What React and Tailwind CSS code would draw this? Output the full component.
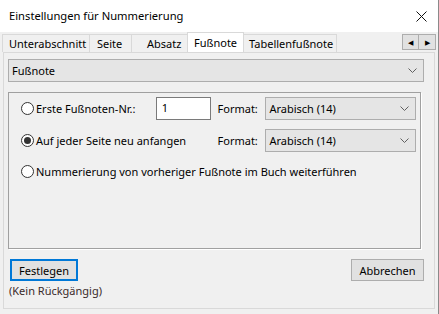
const font = { fontFamily: '"Segoe UI", "Noto Sans", Arial, sans-serif' };

function Chevron() {
  return (
    <svg width="9" height="5" viewBox="0 0 9 5" className="block">
      <path d="M0.5 0.5 L4.5 4.5 L8.5 0.5" fill="none" stroke="#606060" strokeWidth="1" />
    </svg>
  );
}

function Combo({ label, className }) {
  return (
    <div className={`flex h-[23px] items-center justify-between border border-[#adadad] bg-[#e5e5e5] pl-[3px] pr-[6px] ${className}`}>
      <span>{label}</span>
      <Chevron />
    </div>
  );
}

function Radio({ checked }) {
  return (
    <span className="flex h-[13px] w-[13px] shrink-0 items-center justify-center rounded-full border border-[#333] bg-white">
      {checked && <span className="h-[7px] w-[7px] rounded-full bg-[#333]" />}
    </span>
  );
}

export default function App() {
  return (
    <div style={font} className="flex h-[314px] w-[439px] flex-col overflow-hidden whitespace-nowrap border-r border-[#8a8a8a] bg-[#f0f0f0] text-[11px] leading-none text-black">
      {/* title bar */}
      <div className="flex h-[32px] shrink-0 items-center justify-between bg-white pl-[9px] pr-[11px]">
        <span className="text-[11.2px]">Einstellungen für Nummerierung</span>
        <svg width="11" height="11" viewBox="0 0 11 11">
          <path d="M0.5 0.5 L10.5 10.5 M10.5 0.5 L0.5 10.5" stroke="#111" strokeWidth="1" />
        </svg>
      </div>

      {/* tab strip */}
      <div className="flex h-[20px] shrink-0 items-end pl-[2px] pr-[2px]">
        <div className="flex h-[18px] w-[88px] items-center border border-b-0 border-[#d9d9d9] pl-[6px]">Unterabschnitt</div>
        <div className="flex h-[18px] w-[42px] items-center border-r border-t border-[#d9d9d9] pl-[7px]">Seite</div>
        <div className="flex h-[18px] w-[55px] items-center border-t border-[#d9d9d9] pl-[15px]">Absatz</div>
        <div className="flex h-[20px] w-[57px] items-center border border-b-0 border-[#d9d9d9] bg-white pl-[6px]">Fußnote</div>
        <div className="flex h-[18px] w-[93px] items-center border-r border-t border-[#d9d9d9] pl-[5px]">Tabellenfußnote</div>
        <div className="ml-auto flex self-start pt-[2px]">
          <div className="flex h-[16px] w-[17px] items-center justify-center border border-[#adadad] bg-[#e1e1e1] text-[7px]">◀</div>
          <div className="flex h-[16px] w-[17px] items-center justify-center border border-l-0 border-[#adadad] bg-[#e1e1e1] text-[7px]">▶</div>
        </div>
      </div>

      {/* tab page */}
      <div className="mx-[3px] mb-[5px] flex flex-1 flex-col border border-[#d9d9d9] pl-[4px] pr-[10px] pt-[6px]">
        <Combo label="Fußnote" className="h-[22px]" />

        <div className="mr-[3px] mt-[10px] flex h-[157px] flex-col border border-[#a0a0a0] pl-[12px] pr-[4px] pt-[4px] shadow-[1px_1px_0_#ffffff]">
          <div className="flex h-[23px] items-center">
            <Radio />
            <span className="ml-[2px] w-[120px]">Erste Fußnoten-Nr.:</span>
            <div className="flex h-[23px] w-[55px] items-start border border-[#7a7a7a] bg-white pl-[5px] pt-[4px]">1</div>
            <span className="ml-[7px] w-[48px]">Format:</span>
            <Combo label="Arabisch (14)" className="w-[151px]" />
          </div>
          <div className="mt-[9px] flex h-[23px] items-center">
            <Radio checked />
            <span className="ml-[2px] w-[175px]">Auf jeder Seite neu anfangen</span>
            <span className="ml-[7px] w-[48px]">Format:</span>
            <Combo label="Arabisch (14)" className="w-[151px]" />
          </div>
          <div className="mt-[11px] flex h-[16px] items-center">
            <Radio />
            <span className="ml-[2px]">Nummerierung von vorheriger Fußnote im Buch weiterführen</span>
          </div>
        </div>

        <div className="mt-[10px] flex items-center justify-between pl-[2px]">
          <button className="h-[22px] w-[68px] border-2 border-[#0078d7] bg-[#e1e1e1] text-[11px]">Festlegen</button>
          <button className="h-[22px] w-[73px] border border-[#adadad] bg-[#e1e1e1] text-[11px]">Abbrechen</button>
        </div>
        <div className="mt-[4px] pl-[1px] text-[#3a2a2a]">(Kein Rückgängig)</div>
      </div>
    </div>
  );
}
